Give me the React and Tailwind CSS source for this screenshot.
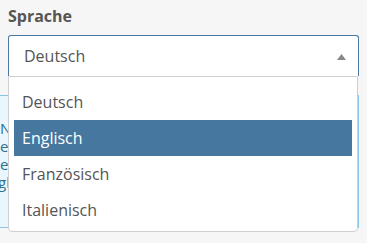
import React from 'react';

const languages = ['Deutsch', 'Englisch', 'Französisch', 'Italienisch'];

export default function App() {
  const selected = 'Englisch';

  return (
    <div className="relative w-[367px] h-[243px] overflow-hidden bg-[#f6f6f6] font-['Open_Sans',sans-serif] text-[#555]">
      <div className="px-2 pt-[5px]">
        <label className="block text-[16px] font-bold leading-[22px] text-[#555]">Sprache</label>

        {/* Select control (open) */}
        <div className="mt-[8px] flex h-[41px] items-center justify-between rounded-t-[3px] border border-b-0 border-[#4a78a0] bg-white pl-[15px] pr-[12px]">
          <span className="text-[16px]">Deutsch</span>
          <svg width="9" height="6" viewBox="0 0 9 6" className="mt-[1px]">
            <path d="M4.5 0 L9 6 L0 6 Z" fill="#888" />
          </svg>
        </div>

        {/* Info box behind the dropdown */}
        <div className="-ml-[30px] mt-[19px] h-[133px] border border-[#8cc4e6] bg-[#eaf6fd] pl-[21px] pt-[23px] text-[15px] leading-[18px] text-[#31708f]">
          <div>N</div>
          <div>er</div>
          <div>e</div>
          <div className="-ml-[2px]">gli</div>
        </div>
      </div>

      {/* Dropdown list */}
      <div className="absolute left-2 top-[76px] w-[350px] h-[156px] rounded-b-[4px] border border-[#cfcfcf] bg-white px-[5px] pt-[7px]">
        {languages.map((lang) => (
          <div
            key={lang}
            className={`flex h-[36px] items-center pl-[8px] text-[16px] ${
              lang === selected ? 'bg-[#46779e] text-white' : 'text-[#555]'
            }`}
          >
            {lang}
          </div>
        ))}
      </div>
    </div>
  );
}
